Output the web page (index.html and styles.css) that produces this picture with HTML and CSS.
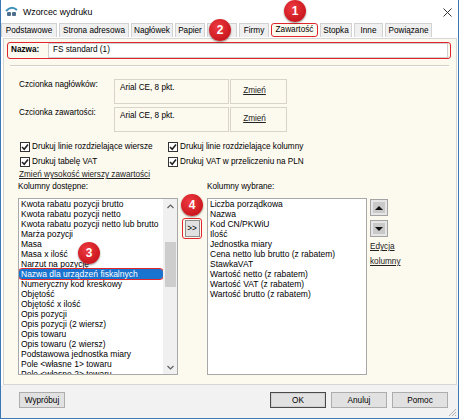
FILE: index.html
```html
<!DOCTYPE html>
<html>

<head>
    <title>Wzorzec wydruku</title>
    <link rel="stylesheet" href="styles.css">
</head>

<body>
    <div class="window">
        <div class="titlebar">
            <svg class="app-icon" width="13" height="11" viewBox="0 0 13 11">
                <path d="M1 5 Q6.5 -1 12 4" fill="none" stroke="#3f8fb8" stroke-width="2"/>
                <rect x="2" y="6" width="4" height="4" rx="1" fill="#4d6f8f"/>
                <rect x="7" y="6" width="4" height="4" rx="1" fill="#4d6f8f"/>
            </svg>
            <span class="title">Wzorcec wydruku</span>
            <svg class="close" width="9" height="9" viewBox="0 0 9 9">
                <path d="M0.5 0.5 L8.5 8.5 M8.5 0.5 L0.5 8.5" stroke="#333" stroke-width="1"/>
            </svg>
        </div>

        <div class="tabs">
            <span class="tab tab-basic">Podstawowe</span>
            <span class="tab tab-address">Strona adresowa</span>
            <span class="tab tab-header">Nagłówek</span>
            <span class="tab tab-paper">Papier</span>
            <span class="tab tab-bg">Tła</span>
            <span class="tab tab-firms">Firmy</span>
            <span class="tab tab-active">Zawartość</span>
            <span class="tab tab-footer">Stopka</span>
            <span class="tab tab-other">Inne</span>
            <span class="tab tab-linked">Powiązane</span>
        </div>

        <div class="panel">
            <div class="name-row">
                <span class="name-label">Nazwa:</span>
                <div class="name-input">FS standard (1)</div>
            </div>
            <div class="separator"></div>

            <div class="font-row">
                <span class="font-label">Czcionka nagłówków:</span>
                <div class="font-box">Arial CE, 8 pkt.</div>
                <div class="font-change"><a class="link">Zmień</a></div>
            </div>
            <div class="font-row">
                <span class="font-label">Czcionka zawartości:</span>
                <div class="font-box">Arial CE, 8 pkt.</div>
                <div class="font-change"><a class="link">Zmień</a></div>
            </div>

            <div class="checks">
                <label class="check"><span class="box"><svg width="8" height="8" viewBox="0 0 8 8"><path d="M1 4 L3.2 6.2 L7 1.5" fill="none" stroke="#222" stroke-width="1.6"/></svg></span>Drukuj linie rozdzielające wiersze</label>
                <label class="check"><span class="box"><svg width="8" height="8" viewBox="0 0 8 8"><path d="M1 4 L3.2 6.2 L7 1.5" fill="none" stroke="#222" stroke-width="1.6"/></svg></span>Drukuj linie rozdzielające kolumny</label>
                <label class="check"><span class="box"><svg width="8" height="8" viewBox="0 0 8 8"><path d="M1 4 L3.2 6.2 L7 1.5" fill="none" stroke="#222" stroke-width="1.6"/></svg></span>Drukuj tabelę VAT</label>
                <label class="check"><span class="box"><svg width="8" height="8" viewBox="0 0 8 8"><path d="M1 4 L3.2 6.2 L7 1.5" fill="none" stroke="#222" stroke-width="1.6"/></svg></span>Drukuj VAT w przeliczeniu na PLN</label>
            </div>

            <a class="link row-height">Zmień wysokość wierszy zawartości</a>

            <div class="columns">
                <div class="col-list">
                    <div class="caption">Kolumny dostępne:</div>
                    <div class="listbox">
                        <div class="items">
                            <div class="item">Kwota rabatu pozycji brutto</div>
                            <div class="item">Kwota rabatu pozycji netto</div>
                            <div class="item">Kwota rabatu pozycji netto lub brutto</div>
                            <div class="item">Marża pozycji</div>
                            <div class="item">Masa</div>
                            <div class="item">Masa x ilość</div>
                            <div class="item">Narzut na pozycję</div>
                            <div class="item selected">Nazwa dla urządzeń fiskalnych</div>
                            <div class="item">Numeryczny kod kreskowy</div>
                            <div class="item">Objętość</div>
                            <div class="item">Objętość x ilość</div>
                            <div class="item">Opis pozycji</div>
                            <div class="item">Opis pozycji (2 wiersz)</div>
                            <div class="item">Opis towaru</div>
                            <div class="item">Opis towaru (2 wiersz)</div>
                            <div class="item">Podstawowa jednostka miary</div>
                            <div class="item">Pole &lt;własne 1&gt; towaru</div>
                            <div class="item">Pole &lt;własne 2&gt; towaru</div>
                        </div>
                        <div class="scrollbar">
                            <div class="arrow">
                                <svg width="7" height="5" viewBox="0 0 7 5"><path d="M0.5 4 L3.5 1 L6.5 4" fill="none" stroke="#606060" stroke-width="1.2"/></svg>
                            </div>
                            <div class="track"><div class="thumb"></div></div>
                            <div class="arrow">
                                <svg width="7" height="5" viewBox="0 0 7 5"><path d="M0.5 1 L3.5 4 L6.5 1" fill="none" stroke="#606060" stroke-width="1.2"/></svg>
                            </div>
                        </div>
                    </div>
                </div>

                <div class="col-move">
                    <div class="move-wrap"><button class="move-btn">&gt;&gt;</button></div>
                </div>

                <div class="col-list">
                    <div class="caption">Kolumny wybrane:</div>
                    <div class="listbox">
                        <div class="items">
                            <div class="item">Liczba porządkowa</div>
                            <div class="item">Nazwa</div>
                            <div class="item">Kod CN/PKWiU</div>
                            <div class="item">Ilość</div>
                            <div class="item">Jednostka miary</div>
                            <div class="item">Cena netto lub brutto (z rabatem)</div>
                            <div class="item">StawkaVAT</div>
                            <div class="item">Wartość netto (z rabatem)</div>
                            <div class="item">Wartość VAT (z rabatem)</div>
                            <div class="item">Wartość brutto (z rabatem)</div>
                        </div>
                    </div>
                </div>

                <div class="col-side">
                    <button class="order-btn"><span class="tri-up"></span></button>
                    <button class="order-btn"><span class="tri-down"></span></button>
                    <a class="link side-link">Edycja</a>
                    <a class="link side-link">kolumny</a>
                </div>
            </div>
        </div>

        <div class="footer">
            <button class="btn btn-try">Wypróbuj</button>
            <span class="spacer"></span>
            <button class="btn btn-default">OK</button>
            <button class="btn">Anuluj</button>
            <button class="btn">Pomoc</button>
        </div>

        <svg class="grip" width="9" height="9" viewBox="0 0 9 9">
            <path d="M8 1 L1 8 M8 4 L4 8 M8 7 L7 8" stroke="#b0b0b0" stroke-width="1"/>
        </svg>

        <span class="badge badge-1">1</span>
        <span class="badge badge-2">2</span>
        <span class="badge badge-3">3</span>
        <span class="badge badge-4">4</span>
    </div>
</body>

</html>
```

FILE: styles.css
```css
* {
    box-sizing: border-box;
}

body {
    margin: 0;
    font-family: "Liberation Sans", Arial, sans-serif;
    font-size: 8.2px;
    color: #000;
    background-color: #fff;
}

.window {
    position: relative;
    width: 459px;
    height: 419px;
    display: flex;
    flex-direction: column;
    border: 1px solid #3b78b5;
    border-top: none;
    background-color: #fff;
    overflow: hidden;
}

.titlebar {
    height: 23px;
    display: flex;
    align-items: center;
    padding: 0 6px 0 4px;
}

.app-icon {
    margin-right: 5px;
}

.title {
    flex: 1;
    font-size: 8.8px;
}

.tabs {
    height: 15px;
    display: flex;
    gap: 2px;
}

.tab {
    height: 14px;
    line-height: 13px;
    text-align: center;
    white-space: nowrap;
    background-color: #f0f0f0;
    border: 1px solid #d2d2d2;
    border-bottom: none;
}

.tab-basic { width: 56px; }
.tab-address { width: 70px; }
.tab-header { width: 42px; }
.tab-paper { width: 30px; }
.tab-bg { width: 30px; }
.tab-firms { width: 30px; }
.tab-footer { width: 32px; }
.tab-other { width: 29px; }
.tab-linked { width: 47px; }

.tab-active {
    width: 47px;
    background-color: #fcf9ef;
    border: 1.5px solid #e0262c;
    border-radius: 3px;
    line-height: 11px;
}

.panel {
    flex: 1;
    margin: 0 1px 0 2px;
    padding: 3px 5px 0 3px;
    background-color: #fcf9ef;
    border: 1px solid #d6d6d6;
    display: flex;
    flex-direction: column;
}

.name-row {
    height: 17px;
    display: flex;
    border: 1.5px solid #e0262c;
    border-radius: 3px;
}

.name-label {
    width: 40px;
    padding-left: 3px;
    font-weight: bold;
    line-height: 14px;
}

.name-input {
    flex: 1;
    margin: 0 2px 0 0;
    padding-left: 4px;
    line-height: 12px;
    background-color: #fff;
    border: 1px solid #cfcfcf;
}

.separator {
    height: 2px;
    margin: 6px 2px 0 3px;
    border-top: 1px solid #d5d1c5;
    border-bottom: 1px solid #fff;
}

.font-row {
    height: 25px;
    display: flex;
    margin: 12px 0 0 12px;
}

.font-row + .font-row {
    margin-top: 3px;
}

.font-label {
    width: 95px;
    padding-top: 1px;
    line-height: 10px;
}

.font-box {
    width: 115px;
    padding: 3px 0 0 5px;
    border: 1px solid #d8d4c8;
    line-height: 10px;
}

.font-change {
    width: 57px;
    margin-left: 1px;
    padding: 6px 8px 0 0;
    text-align: center;
    border: 1px solid #d8d4c8;
    line-height: 10px;
}

.link {
    text-decoration: underline;
    color: #222;
}

.checks {
    display: grid;
    grid-template-columns: 148px auto;
    margin: 7px 0 0 13px;
}

.check {
    height: 15px;
    display: flex;
    align-items: center;
    gap: 2px;
}

.box {
    width: 10px;
    height: 10px;
    display: flex;
    align-items: center;
    justify-content: center;
    background-color: #fff;
    border: 1px solid #333;
}

.row-height {
    margin: 1px 0 0 12px;
    line-height: 10px;
}

.columns {
    display: flex;
    margin: 2px 0 0 11px;
}

.col-list {
    width: 160px;
}

.caption {
    height: 10px;
    line-height: 10px;
    margin-bottom: 6px;
}

.listbox {
    height: 177px;
    display: flex;
    background-color: #fff;
    border: 1px solid #a8a8a8;
    overflow: hidden;
}

.items {
    flex: 1;
    overflow: hidden;
    font-size: 8.5px;
}

.item {
    height: 10px;
    line-height: 10px;
    padding-left: 2px;
    white-space: nowrap;
}

.item.selected {
    background-color: #1874cf;
    color: #fff;
    outline: 1.5px solid #e0262c;
    border-radius: 3px;
}

.scrollbar {
    width: 14px;
    display: flex;
    flex-direction: column;
    background-color: #f0f0f0;
}

.arrow {
    height: 14px;
    display: flex;
    align-items: center;
    justify-content: center;
}

.track {
    flex: 1;
}

.thumb {
    height: 45px;
    margin: 29px 1px 0 2px;
    background-color: #cdcdcd;
}

.col-move {
    width: 29px;
    padding: 36px 0 0 4px;
}

.move-wrap {
    width: 20px;
    height: 21px;
    display: flex;
    align-items: center;
    justify-content: center;
    border: 1.5px solid #e0262c;
    border-radius: 3px;
}

.move-btn {
    width: 15px;
    height: 17px;
    padding: 0;
    font: inherit;
    background-color: #e1e1e1;
    border: 1px solid #8c8c8c;
}

.col-side {
    display: flex;
    flex-direction: column;
    align-items: flex-start;
    padding: 17px 0 0 3px;
}

.order-btn {
    width: 18px;
    height: 17px;
    padding: 0;
    display: flex;
    align-items: center;
    justify-content: center;
    background-color: #e6e6e6;
    border: 1px solid #a3a3a3;
}

.order-btn + .order-btn {
    margin-top: 4px;
}

.tri-up,
.tri-down {
    width: 12px;
    height: 11px;
    display: flex;
    align-items: center;
    justify-content: center;
    background-color: #c9c9c9;
}

.tri-up::after {
    content: "";
    border: 4px solid transparent;
    border-top: none;
    border-bottom: 4px solid #111;
}

.tri-down::after {
    content: "";
    border: 4px solid transparent;
    border-bottom: none;
    border-top: 4px solid #111;
}

.side-link {
    line-height: 15px;
}

.side-link:first-of-type {
    margin-top: 2px;
}

.footer {
    height: 33px;
    display: flex;
    gap: 5px;
    padding: 7px 10px 0 18px;
    background-color: #f2f2f2;
}

.spacer {
    flex: 1;
}

.btn {
    width: 56px;
    height: 16px;
    padding: 0;
    font: inherit;
    background-color: #e1e1e1;
    border: 1px solid #adadad;
}

.btn-try {
    width: 46px;
}

.btn-default {
    border-color: #4a4a4a;
    box-shadow: inset 0 0 0 1px #d0d0d0;
}

.grip {
    position: absolute;
    right: 1px;
    bottom: 1px;
}

.close {
    margin-top: 1px;
}

.badge {
    position: absolute;
    width: 22px;
    height: 22px;
    border-radius: 50%;
    display: flex;
    align-items: center;
    justify-content: center;
    font-family: "Liberation Sans", Arial, sans-serif;
    font-size: 12px;
    font-weight: bold;
    color: #fff;
    background: radial-gradient(circle at 40% 35%, #ee3a40, #c8161c 75%);
    box-shadow: 0 1px 2px rgba(0, 0, 0, 0.45);
}

.badge-1 {
    left: 283px;
    top: 0;
}

.badge-2 {
    left: 208px;
    top: 19px;
}

.badge-3 {
    left: 77px;
    top: 242px;
}

.badge-4 {
    left: 180px;
    top: 194px;
}
```
